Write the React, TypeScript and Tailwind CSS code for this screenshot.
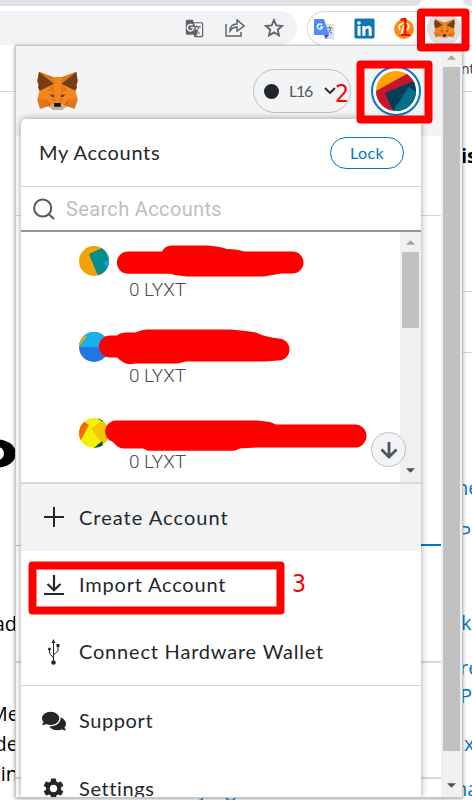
import React from "react";
import { FaComments, FaLinkedin } from "react-icons/fa";
import { MdGTranslate, MdSettings } from "react-icons/md";

const ui = "font-['Lato','Liberation_Sans',sans-serif]";

function Fox({ className }: { className: string }) {
  return (
    <svg viewBox="0 0 123 117" className={className} preserveAspectRatio="none">
      <path fill="#f6851b" d="M6 2 48 18H76L118 2 122 30 115 57 122 85 113 113 90 106 75 116H48L33 106 9 113 1 85 8 57 1 30Z" />
      <path fill="#763d16" d="M6 2 51 38 8 59 3 50 5 42 1 30ZM118 2 73 38 115 59 120 50 118 42 122 30Z" />
      <path fill="#e2761b" d="M6 2 48 18 53 38ZM118 2 76 18 71 38ZM31 59 48 40 53 64ZM93 59 75 40 71 64ZM1 85H28L33 106 9 113ZM122 85H95L90 106 113 113Z" />
      <path fill="#cd6116" d="M28 85 42 102 33 106ZM95 85 81 102 90 106ZM34 70 53 69 51 79ZM89 70 70 69 72 79Z" />
      <path fill="#e4751f" d="M53 64 56 96 44 86 51 78ZM71 64 67 96 79 86 72 78Z" />
      <path fill="#334353" d="M40 73 50 72 51 78 44 77ZM83 73 73 72 72 78 79 77Z" />
      <path fill="#c0ad9e" d="M33 106 51 98H72L90 106 75 116H48Z" />
      <path fill="#161616" d="M52 96H71L72 107H51Z" />
    </svg>
  );
}

function Arrow({ up = false, faint = false }: { up?: boolean; faint?: boolean }) {
  return (
    <svg viewBox="0 0 10 5" className="h-[5px] w-[9px]">
      <path d={up ? "M0 5 5 0 10 5Z" : "M0 0H10L5 5Z"} fill={faint ? "#a3a3a3" : "#505050"} />
    </svg>
  );
}

function Toolbar() {
  return (
    <>
      <div className="flex h-[6px] justify-between">
        <div className="w-[421px] rounded-br-[6px] bg-[#dee1e6]" />
        <div className="w-[9px] rounded-bl-[6px] bg-[#dee1e6]" />
      </div>
      <div className="flex h-10 items-start gap-[10px] pt-[5px]">
        <div className="flex h-[34px] w-[297px] items-center rounded-r-full bg-[#f1f3f4] pl-[185px] text-[#5f6368]">
          <MdGTranslate className="size-[19px]" />
          <svg viewBox="0 0 20 18" className="ml-[21px] h-[18px] w-5" fill="none" stroke="currentColor" strokeWidth="1.5">
            <path d="M1 5V17H16V13M5 12C5 7 8 5 12 5V1L19 7 12 12V8C9 8 7 9 5 12Z" />
          </svg>
          <svg viewBox="0 0 20 20" className="ml-[19px] size-5" fill="none" stroke="currentColor" strokeWidth="1.8">
            <path d="m10 2 2.3 5.4 5.8.5-4.4 3.8 1.3 5.7L10 14.4 5 17.400l1.300-5.700L1.900 7.900l5.800-.5Z" />
          </svg>
        </div>
        <div className="flex h-[35px] flex-1 items-center rounded-l-full border border-r-0 border-[#d5d7da] bg-white pl-[6px]">
          <svg viewBox="0 0 20 20" className="size-5">
            <path fill="#dfe1e4" d="M8 5H19Q20 5 20 6V20H10Z" />
            <path fill="#4d8df6" d="M1 0H10L15 16H1Q0 16 0 15V1Q0 0 1 0Z" />
            <path fill="#3559c7" d="M10 16H15L12 20Z" />
            <path d="M8 6A2.600 2.600 0 1 0 8.500 8.200H6" fill="none" stroke="#fff" strokeWidth="1.300" />
            <path d="M13 9H18M15.500 7.500V9M17 9C16 12 15 14 14 14M14.500 11 18 15" fill="none" stroke="#607d8b" />
          </svg>
          <FaLinkedin className="ml-[19px] size-[23px] text-[#0e76b4]" />
          <div className="ml-[18px] flex size-5 items-center justify-center rounded-full bg-[#ff8b0d]">
            <svg viewBox="0 0 16 16" className="size-4" fill="none" stroke="#fff" strokeWidth="1.500">
              <path d="M5 14 8 4M4 9Q1 5 6 2.500 12 1 13 5 12 10 8 9" />
            </svg>
          </div>
          <div className="ml-[13px] flex size-[34px] items-center justify-center rounded-full bg-[#dfdfdf]">
            <Fox className="h-[19px] w-[21px]" />
          </div>
        </div>
      </div>
    </>
  );
}

function Page() {
  return (
    <div className="flex h-[754px] justify-between font-['Open_Sans',sans-serif] text-[20px] leading-[30px]">
      <div className="flex w-[17px] flex-col items-end overflow-hidden whitespace-nowrap text-black">
        <div className="h-[46px] w-full shrink-0 border-b border-[#d5d7da]" />
        <div className="-mr-[3px] mt-[332px] h-[90px] shrink-0 origin-right scale-x-[1.5] font-['Inter',sans-serif] text-[60px] leading-[74px] font-semibold">P</div>
        <div className="mt-[95px] shrink-0">ad</div>
        <div className="mt-[60px] -mr-[2px] shrink-0">Me</div>
        <div className="-mr-px shrink-0">de</div>
        <div className="-mr-px shrink-0">in</div>
      </div>
      <div className="flex w-[11px] flex-col overflow-hidden whitespace-nowrap text-[#0376c9]">
        <div className="h-[46px] shrink-0 border-b border-[#d5d7da] pt-2 text-[14px] text-[#30344a]">nt</div>
        <div className="mt-[49px] h-[151px] shrink-0 border-b border-[#d5d7da] text-[20px] font-bold text-black">is</div>
        <div className="h-[61px] shrink-0 border-b border-[#d5d7da]" />
        <div className="mt-[120px] -ml-[5px] shrink-0">ne</div>
        <div className="mt-[15px] -ml-[2px] shrink-0">P</div>
        <div className="mt-[60px] shrink-0">k</div>
        <div className="mt-[15px] -ml-[1px] shrink-0">re</div>
        <div className="-mt-[2px] -ml-[1px] shrink-0">P</div>
        <div className="mt-[18px] -ml-[8px] shrink-0">Ex</div>
        <div className="mt-[15px] -ml-[6px] shrink-0">na</div>
      </div>
    </div>
  );
}

function Account({ children, last = false }: { children: React.ReactNode; last?: boolean }) {
  return (
    <div className={last ? "h-[78px] pl-[58px]" : "h-[86px] pl-[58px]"}>
      <svg viewBox="0 0 30 30" className="size-[30px] rounded-full">{children}</svg>
      <div className="mt-[2px] pl-[50px] font-['Roboto',sans-serif] text-[19px] leading-[24px] font-light tracking-[-0.05px] text-[#454c53]">0 LYXT</div>
    </div>
  );
}

function Item({ icon, label, spacing, className = "h-[67px]" }: { icon: React.ReactNode; label: string; spacing: string; className?: string }) {
  return (
    <div className={`flex shrink-0 items-center gap-[13px] pl-5 ${className}`}>
      <div className="flex w-[25px] justify-center">{icon}</div>
      <span className={`-mt-[2px] text-[20px] ${spacing}`}>{label}</span>
    </div>
  );
}

function Menu() {
  return (
    <div className="absolute top-[73px] left-[5px] flex h-[678px] w-[400px] flex-col overflow-hidden rounded-t-[5px] bg-white text-[#24272a] shadow-[0_0_7px_rgba(0,0,0,0.38)]">
      <div className="flex h-[68px] shrink-0 items-center justify-between border-b border-[#d6d9dc] pr-[17px] pl-[18px]">
        <span className="-mt-[2px] text-[20px] tracking-[0.66px]">My Accounts</span>
        <button className="h-8 w-[74px] rounded-full border border-[#0376c9] text-[16px] leading-[30px] tracking-[0.4px] text-[#0376c9]">Lock</button>
      </div>
      <div className="flex h-[45px] shrink-0 items-center border-b-2 border-[#949494] pl-3 font-['Roboto',sans-serif] text-[20px] tracking-[0.350px] text-[#bbbfc4]">
        <svg viewBox="0 0 22 22" className="mr-[11px] size-[22px]" fill="none" stroke="#535a61" strokeWidth="2">
          <circle cx="9.700" cy="10" r="8.600" /><path d="m15.500 16 5.500 5" />
        </svg>
        <span className="mt-px">Search Accounts</span>
      </div>
      <div className="relative flex h-[252px] shrink-0 justify-between border-b-2 border-[#d6d9dc]">
        <div className="flex-1 overflow-hidden pt-[14px]">
          <Account><path fill="#f2a202" d="M0 0H30V30H0Z" /><path fill="#018e8c" d="M10 8 23 2 30 0V30H19Z" /><path fill="#2196f3" d="m24 17 6-4v11Z" /></Account>
          <Account><path fill="#2377e1" d="M0 0H30V30H0Z" /><path fill="#18b2f2" d="M0 0H30V15H0Z" /><path fill="#f2a202" d="M5 4 8 4 0 15V8Z" /></Account>
          <Account last><path fill="#f6f100" d="M0 0H30V30H0Z" /><path fill="#f2c602" d="m12 11 12-9 6 2v18l-6 4Z" /><path fill="#fa6900" d="M0 4 5 4 10 7 2 22H0Z" /><path fill="#034c5e" d="m15 30 8-7 1 4-4 3ZM18 0l6 4-1-4Z" /></Account>
        </div>
        <div className="flex w-[21px] flex-col items-center bg-[#f0f0f0] pt-2 pb-[9px]">
          <Arrow up faint />
          <div className="mt-[7px] h-[76px] w-[17px] bg-[#c1c1c1]" />
          <div className="mt-auto flex"><Arrow /></div>
        </div>
        <div className="absolute right-[15px] bottom-[15px] flex size-[35px] items-center justify-center rounded-full border border-[#bbc0c5] bg-[#f2f4f6]">
          <svg viewBox="0 0 18 18" className="size-[18px]" fill="none" stroke="#50545a" strokeWidth="2.800"><path d="M9 1V16M1.500 8.500 9 16l7.500-7.500" /></svg>
        </div>
      </div>
      <Item className="h-[67px] bg-[#f2f3f5]" spacing="tracking-[1.02px]" label="Create Account" icon={<svg viewBox="0 0 20 20" className="-mt-[2px] size-5" fill="none" stroke="currentColor" strokeWidth="2"><path d="M10 0V20M0 10H20" /></svg>} />
      <Item spacing="tracking-[0.800px]" label="Import Account" icon={<svg viewBox="0 0 20 20" className="size-5" fill="none" stroke="currentColor" strokeWidth="2.200"><path d="M10 0V15M3.500 9 10 15.200 16.500 9M0 19H20" /></svg>} />
      <Item className="h-[68px] border-b border-[#d6d9dc]" spacing="tracking-[0.800px]" label="Connect Hardware Wallet" icon={<svg viewBox="0 0 12 26" className="h-[26px] w-3" fill="none" stroke="currentColor"><path d="M5.500 2V23M5.500 19 1.500 14V10M5.500 16 10 12V6" /><path fill="currentColor" stroke="none" d="m5.500 0 2 4h-4ZM8.500 5h3v3h-3Z" /><circle cx="1.500" cy="10" r="1.500" fill="currentColor" stroke="none" /><circle cx="5.500" cy="23.500" r="2.300" fill="currentColor" stroke="none" /></svg>} />
      <Item className="h-[69px]" spacing="tracking-[0.600px]" label="Support" icon={<FaComments className="size-[24px]" />} />
      <Item spacing="tracking-[0.600px]" label="Settings" icon={<MdSettings className="size-[27px]" />} />
    </div>
  );
}

function Popup() {
  return (
    <div className={`absolute top-[45px] left-[15px] flex h-[753px] w-[448px] overflow-hidden border border-[#c3c5c8] bg-white shadow-[0_1px_4px_rgba(0,0,0,0.35)] ${ui}`}>
      <div className="flex w-[425px] flex-col">
        <div className="flex h-[90px] shrink-0 items-start bg-[#f2f4f6] pl-[21px]">
          <Fox className="mt-[25px] h-[39px] w-[41px]" />
          <div className="mt-[23px] ml-[175px] flex h-11 w-[98px] shrink-0 items-center rounded-full border border-[#bbc0c5] pl-[10px] text-[#535a61]">
            <div className="size-[15px] shrink-0 rounded-full bg-[#24272a]" />
            <span className="ml-[10px] w-[23px] text-[16px] tracking-[-1.200px]">L16</span>
            <svg viewBox="0 0 12 8" className="ml-[12px] h-2 w-3 shrink-0" fill="none" stroke="#24272a" strokeWidth="1.800"><path d="m1 1 5 5 5-5" /></svg>
          </div>
          <div className="mt-[20px] ml-[20px] flex size-[50px] shrink-0 items-center justify-center rounded-full border-2 border-[#0376c9] bg-white">
            <svg viewBox="0 0 40 40" className="size-10 rounded-full"><path fill="#fba402" d="M0 0H40V40H0Z" /><path fill="#c8142f" d="M0 20 36 0 40 13 15 40 0 36Z" /><path fill="#023e5a" d="m9 22 31-13v31H17Z" /><path fill="#03718b" d="m17 40 16-24 7 5v19Z" /></svg>
          </div>
        </div>
        <div className="h-[80px] shrink-0 border-b border-[#d6d9dc]" />
        <div className="flex h-[330px] shrink-0 items-end justify-between">
          <div className="h-px w-[5px] bg-[#c3c5c8]" />
          <div className="h-[2px] w-5 bg-[#0376c9]" />
        </div>
        <div className="h-[117px] shrink-0 border-b-2 border-[#d6d9dc]" />
        <div className="h-[116px] shrink-0 border-b-2 border-[#d6d9dc]" />
      </div>
      <div className="flex w-[21px] shrink-0 flex-col items-center bg-[#f0f0f0] pt-[9px] pb-[9px]">
        <Arrow up faint />
        <div className="mt-[7px] h-[684px] w-[17px] shrink-0 bg-[#c1c1c1]" />
        <div className="mt-auto flex"><Arrow /></div>
      </div>
      <Menu />
    </div>
  );
}

function Marks() {
  return (
    <div className="pointer-events-none absolute inset-0 font-['DejaVu_Sans',sans-serif] text-[24px] leading-[34px] text-[#ff0000]">
      <svg viewBox="0 0 472 800" className="h-[800px] w-[472px]">
        <g fill="none" stroke="#ff0000" strokeWidth="8" strokeLinejoin="round">
          <rect x="421" y="12.500" width="44.500" height="35" />
          <rect x="360.500" y="64.500" width="68" height="55" />
          <rect x="32.500" y="565.500" width="248" height="45" />
        </g>
        <g fill="#ff0000">
          <path d="M128 251.500H162Q165 245.500 172 245.500H207Q219 246 227 249 238 249 244 251.500H292.500A11 11 0 0 1 292.500 273.500H281L264 276.500H187L175 275 170 273.700H128A11 11 0 0 1 128 251.500Z" />
          <path d="M110 335.500H117Q120 332.500 127 332.500H135Q143 329.500 147 329.500H230Q248 331 256 332.500 265 337 278.500 338.500A11 11 0 0 1 278.500 360.500L265 361.500H186L178 363.500H135Q127 366 120 360L117 357.500H110A11 11 0 0 1 110 335.500Z" />
          <path d="M117 420.500H258L270 422 276 424.500H355A11.500 11.500 0 0 1 355 447.500H256L240 448.500 234 450.700H148L143 448.500H123Q118 448 113 442A11 11 0 0 1 117 420.500Z" />
        </g>
      </svg>
      <span className="absolute top-[11px] left-[398px] origin-left scale-x-[0.92]">1</span>
      <span className="absolute top-[77px] left-[335px] origin-left scale-x-[0.92]">2</span>
      <span className="absolute top-[567px] left-[292px] origin-left scale-x-[0.92]">3</span>
    </div>
  );
}

export default function App() {
  return (
    <div className="relative h-[800px] w-[472px] overflow-hidden bg-white">
      <Toolbar />
      <Page />
      <Popup />
      <div className="absolute top-[798px] left-[198px] h-[2px] w-14 overflow-hidden font-['Open_Sans',sans-serif] text-[20px] leading-[3px] text-[#0376c9]"><span className="relative -top-[11px]">ying</span></div>
      <Marks />
    </div>
  );
}
